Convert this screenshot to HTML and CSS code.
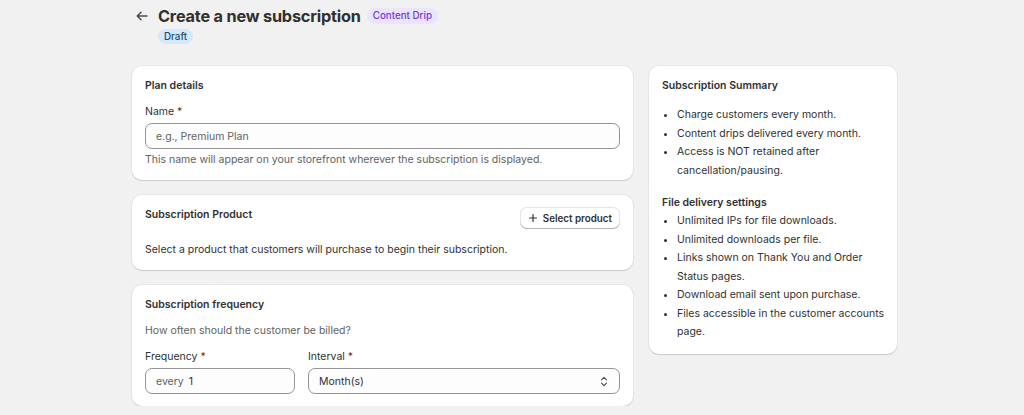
FILE: index.html
```html
<!DOCTYPE html>
<html lang="en">
<head>
<meta charset="utf-8">
<title>Create a new subscription</title>
<link rel="stylesheet" href="styles.css">
</head>
<body>
<div class="page">
  <header class="page-header">
    <button class="back" aria-label="Back">
      <svg width="12" height="10" viewBox="0 0 12 10" fill="none" stroke="#4a4a4a" stroke-width="1.5" stroke-linecap="round" stroke-linejoin="round"><path d="M11 5H1.2M5 1.2L1.2 5 5 8.8"/></svg>
    </button>
    <div class="title-block">
      <div class="title-line">
        <h1>Create a new subscription</h1>
        <span class="badge badge-magic">Content Drip</span>
      </div>
      <span class="badge badge-info">Draft</span>
    </div>
  </header>

  <div class="layout">
    <div class="primary">
      <section class="card">
        <h2 class="card-title">Plan details</h2>
        <label class="field-label">Name <span class="req">*</span></label>
        <div class="input"><span class="placeholder">e.g., Premium Plan</span></div>
        <p class="help">This name will appear on your storefront wherever the subscription is displayed.</p>
      </section>

      <section class="card">
        <div class="card-head">
          <h2 class="card-title">Subscription Product</h2>
          <button class="btn">
            <svg width="8" height="8" viewBox="0 0 8 8" stroke="#303030" stroke-width="1.2" stroke-linecap="round"><path d="M4 0.6v6.8M0.6 4h6.8"/></svg>
            Select product
          </button>
        </div>
        <p class="desc">Select a product that customers will purchase to begin their subscription.</p>
      </section>

      <section class="card">
        <h2 class="card-title">Subscription frequency</h2>
        <p class="sub">How often should the customer be billed?</p>
        <div class="freq-grid">
          <div class="field">
            <label class="field-label">Frequency <span class="req">*</span></label>
            <div class="input"><span class="prefix">every</span><span class="value">1</span></div>
          </div>
          <div class="field">
            <label class="field-label">Interval <span class="req">*</span></label>
            <div class="input select"><span class="value">Month(s)</span>
              <svg width="8" height="11" viewBox="0 0 8 11" fill="none" stroke="#4a4a4a" stroke-width="1.1" stroke-linecap="round" stroke-linejoin="round"><path d="M1.5 3.8L4 1.3l2.5 2.5M1.5 7.2L4 9.7l2.5-2.5"/></svg>
            </div>
          </div>
        </div>
      </section>
    </div>

    <aside class="secondary">
      <section class="card summary">
        <h2 class="card-title">Subscription Summary</h2>
        <ul class="list first">
          <li>Charge customers every month.</li>
          <li>Content drips delivered every month.</li>
          <li>Access is NOT retained after cancellation/pausing.</li>
        </ul>
        <h3 class="section-title">File delivery settings</h3>
        <ul class="list">
          <li>Unlimited IPs for file downloads.</li>
          <li>Unlimited downloads per file.</li>
          <li>Links shown on Thank You and Order Status pages.</li>
          <li>Download email sent upon purchase.</li>
          <li>Files accessible in the customer accounts page.</li>
        </ul>
      </section>
    </aside>
  </div>
</div>
</body>
</html>
```

FILE: styles.css
```css
* { box-sizing: border-box; }

body {
  margin: 0;
  background: #f1f1f1;
  font-family: Inter, "Noto Sans", sans-serif;
  font-size: 10.5px;
  line-height: 17px;
  color: #303030;
}

.page {
  width: 765px;
  margin-left: 132px;
  padding-top: 6px;
}

.page-header {
  display: flex;
  align-items: flex-start;
  gap: 6px;
}

.back {
  width: 20px;
  height: 20px;
  padding: 0;
  border: 0;
  background: transparent;
  display: flex;
  align-items: center;
  justify-content: center;
}

.title-block {
  display: flex;
  flex-direction: column;
  align-items: flex-start;
}

.title-line {
  display: flex;
  align-items: center;
  gap: 6px;
  height: 20px;
}

h1 {
  margin: 0;
  font-size: 16.3px;
  line-height: 20px;
  font-weight: 700;
  letter-spacing: -0.2px;
  color: #303030;
}

.badge {
  display: inline-flex;
  align-items: center;
  height: 16px;
  padding: 0 6px;
  border-radius: 8px;
  font-size: 9.8px;
  font-weight: 500;
  line-height: 16px;
}

.badge-magic {
  background: #ece4fe;
  color: #6b3be0;
}

.badge-info {
  margin-top: 3px;
  height: 15px;
  background: #d3e9fd;
  color: #1e4b6e;
}

.layout {
  display: grid;
  grid-template-columns: 501px 248px;
  gap: 16px;
  margin-top: 22px;
  align-items: start;
}

.primary {
  display: flex;
  flex-direction: column;
  gap: 15px;
}

.card {
  background: #fff;
  border-radius: 10px;
  padding: 11px 13px 12px;
  box-shadow: 0 1px 1px rgba(0, 0, 0, 0.12), 0 0 0 1px rgba(0, 0, 0, 0.04);
}

.card-title {
  margin: 0;
  font-size: 10.5px;
  line-height: 17px;
  font-weight: 600;
}

.card > .card-title { margin-bottom: 9px; }

.field-label {
  display: block;
  margin-bottom: 3px;
}

.req { color: #8e1f0b; }

.input {
  height: 26px;
  border: 1px solid #949494;
  border-radius: 7px;
  background: #fdfdfd;
  display: flex;
  align-items: center;
  padding: 0 10px;
}

.placeholder, .prefix { color: #616161; }

.prefix { margin-right: 5px; }

.help {
  margin: 2px 0 0;
  color: #616161;
}

.card-head {
  display: flex;
  justify-content: space-between;
  align-items: flex-start;
}

.btn {
  height: 22px;
  margin-top: 1px;
  padding: 0 8px 0 9px;
  display: inline-flex;
  align-items: center;
  gap: 6px;
  border: 0;
  border-radius: 7px;
  background: #fff;
  font-family: inherit;
  font-size: 9.8px;
  font-weight: 600;
  color: #303030;
  box-shadow: inset 0 -1px 0 #b5b5b5, inset 0 0 0 1px rgba(0, 0, 0, 0.1);
}

.desc {
  margin: 12px 0 0;
}

.sub {
  margin: 0 0 9px;
  color: #616161;
}

.freq-grid {
  display: grid;
  grid-template-columns: 150px 1fr;
  gap: 13px;
}

.select {
  justify-content: space-between;
  padding-right: 11px;
}

.summary { padding-right: 8px; }

.summary .card-title { margin-bottom: 0; }

.list {
  margin: 0;
  padding-left: 15px;
  line-height: 18.5px;
}

.list.first { margin-top: 12px; }

.section-title {
  margin: 14px 0 1px;
  font-size: 10.5px;
  line-height: 17px;
  font-weight: 600;
}
```
